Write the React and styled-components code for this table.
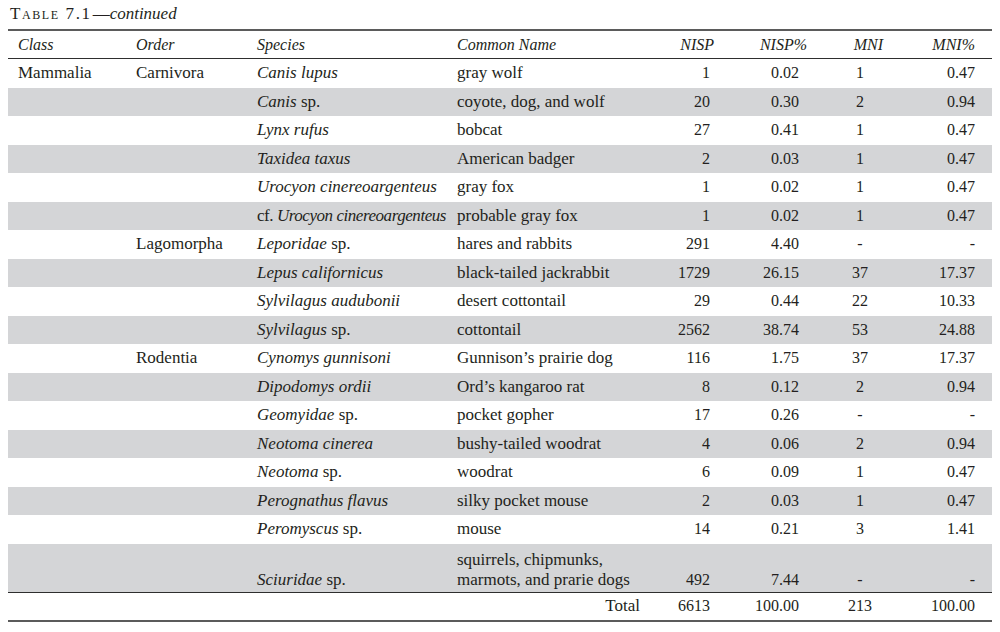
import React from 'react';
import styled, { createGlobalStyle } from 'styled-components';

const GlobalStyle = createGlobalStyle`
  html, body {
    margin: 0;
    padding: 0;
    background: #ffffff;
  }
  body {
    font-family: "Liberation Serif", "Times New Roman", serif;
    color: #231f20;
  }
`;

const COLUMNS = '118px 121px 200px 193px 76px 93px 76px 107px';

const Page = styled.div`
  width: 1000px;
  height: 632px;
  overflow: hidden;
`;

const Caption = styled.div`
  padding: 4px 0 0 10px;
  height: 25px;
  line-height: 20px;
  font-size: 17px;
`;

const SmallCaps = styled.span`
  font-variant: small-caps;
  letter-spacing: 1.6px;
  margin-right: 1px;
`;

const Table = styled.div`
  margin: 0 8px;
  border-top: 2px solid #5b5b5b;
  border-bottom: 2px solid #5b5b5b;
`;

const HeaderRow = styled.div`
  display: grid;
  grid-template-columns: ${COLUMNS};
  align-items: center;
  height: 27px;
  border-bottom: 1.5px solid #2e2e2e;
  font-size: 16px;
  font-style: italic;
`;

const HeaderCell = styled.div`
  text-align: ${p => p.$align || 'left'};
  padding-left: ${p => p.$pl ?? 0}px;
  padding-right: ${p => p.$pr ?? 0}px;
  white-space: nowrap;
`;

const Row = styled.div`
  display: grid;
  grid-template-columns: ${COLUMNS};
  align-items: ${p => (p.$tall ? 'end' : 'center')};
  height: ${p => (p.$tall ? 48 : 28.5)}px;
  padding-bottom: ${p => (p.$tall ? 2 : 0)}px;
  box-sizing: border-box;
  background: ${p => (p.$shade ? '#d4d5d7' : '#ffffff')};
  font-size: 17px;
  line-height: 20px;
`;

const TotalRow = styled(Row)`
  border-top: 1.5px solid #2e2e2e;
  height: 28px;
`;

const Cell = styled.div`
  text-align: ${p => p.$align || 'left'};
  padding-left: ${p => p.$pl ?? 0}px;
  padding-right: ${p => p.$pr ?? 0}px;
  white-space: pre;
`;

const SpeciesCell = styled(Cell)`
  letter-spacing: ${p => (p.$tight ? '-0.45px' : 'normal')};
`;

const NumCell = styled(Cell)`
  font-size: 16px;
`;

const TotalLabel = styled(Cell)`
  grid-column: 1 / 5;
`;

const header = [
  { label: 'Class', pl: 10 },
  { label: 'Order', pl: 10 },
  { label: 'Species', pl: 10 },
  { label: 'Common Name', pl: 10 },
  { label: 'NISP', align: 'right', pr: 2 },
  { label: 'NISP%', align: 'right', pr: 2 },
  { label: 'MNI', align: 'right', pr: 2 },
  { label: 'MNI%', align: 'right', pr: 17 },
];

const numCols = [
  { align: 'right', pr: 6 },
  { align: 'right', pr: 10 },
  { align: 'center', pl: 26 },
  { align: 'right', pr: 17 },
];

const rows = [
  ['Mammalia', 'Carnivora', ['', 'Canis lupus', ''], 'gray wolf', '1', '0.02', '1', '0.47'],
  ['', '', ['', 'Canis', ' sp.'], 'coyote, dog, and wolf', '20', '0.30', '2', '0.94'],
  ['', '', ['', 'Lynx rufus', ''], 'bobcat', '27', '0.41', '1', '0.47'],
  ['', '', ['', 'Taxidea taxus', ''], 'American badger', '2', '0.03', '1', '0.47'],
  ['', '', ['', 'Urocyon cinereoargenteus', ''], 'gray fox', '1', '0.02', '1', '0.47'],
  ['', '', ['cf. ', 'Urocyon cinereoargenteus', ''], 'probable gray fox', '1', '0.02', '1', '0.47'],
  ['', 'Lagomorpha', ['', 'Leporidae', ' sp.'], 'hares and rabbits', '291', '4.40', '-', '-'],
  ['', '', ['', 'Lepus californicus', ''], 'black-tailed jackrabbit', '1729', '26.15', '37', '17.37'],
  ['', '', ['', 'Sylvilagus audubonii', ''], 'desert cottontail', '29', '0.44', '22', '10.33'],
  ['', '', ['', 'Sylvilagus', ' sp.'], 'cottontail', '2562', '38.74', '53', '24.88'],
  ['', 'Rodentia', ['', 'Cynomys gunnisoni', ''], 'Gunnison’s prairie dog', '116', '1.75', '37', '17.37'],
  ['', '', ['', 'Dipodomys ordii', ''], 'Ord’s kangaroo rat', '8', '0.12', '2', '0.94'],
  ['', '', ['', 'Geomyidae', ' sp.'], 'pocket gopher', '17', '0.26', '-', '-'],
  ['', '', ['', 'Neotoma cinerea', ''], 'bushy-tailed woodrat', '4', '0.06', '2', '0.94'],
  ['', '', ['', 'Neotoma', ' sp.'], 'woodrat', '6', '0.09', '1', '0.47'],
  ['', '', ['', 'Perognathus flavus', ''], 'silky pocket mouse', '2', '0.03', '1', '0.47'],
  ['', '', ['', 'Peromyscus', ' sp.'], 'mouse', '14', '0.21', '3', '1.41'],
  ['', '', ['', 'Sciuridae', ' sp.'], 'squirrels, chipmunks,\nmarmots, and prarie dogs', '492', '7.44', '-', '-'],
];

const totals = ['6613', '100.00', '213', '100.00'];

export default function App() {
  return (
    <Page>
      <GlobalStyle />
      <Caption>
        <SmallCaps>Table 7.1</SmallCaps>—<em>continued</em>
      </Caption>
      <Table>
        <HeaderRow>
          {header.map(h => (
            <HeaderCell key={h.label} $align={h.align} $pl={h.pl} $pr={h.pr}>
              {h.label}
            </HeaderCell>
          ))}
        </HeaderRow>
        {rows.map((r, i) => {
          const [cls, order, [pre, it, post], common, ...nums] = r;
          return (
            <Row key={i} $shade={i % 2 === 1} $tall={common.includes('\n')}>
              <Cell $pl={10}>{cls}</Cell>
              <Cell $pl={10}>{order}</Cell>
              <SpeciesCell $pl={10} $tight={(pre + it + post).length > 24}>
                {pre}<em>{it}</em>{post}
              </SpeciesCell>
              <Cell $pl={10}>{common}</Cell>
              {nums.map((n, j) => (
                <NumCell key={j} $align={numCols[j].align} $pl={numCols[j].pl} $pr={numCols[j].pr}>
                  {n}
                </NumCell>
              ))}
            </Row>
          );
        })}
        <TotalRow>
          <TotalLabel $align="right">Total</TotalLabel>
          {totals.map((n, j) => (
            <NumCell key={j} $align={numCols[j].align} $pl={numCols[j].pl} $pr={numCols[j].pr}>
              {n}
            </NumCell>
          ))}
        </TotalRow>
      </Table>
    </Page>
  );
}
